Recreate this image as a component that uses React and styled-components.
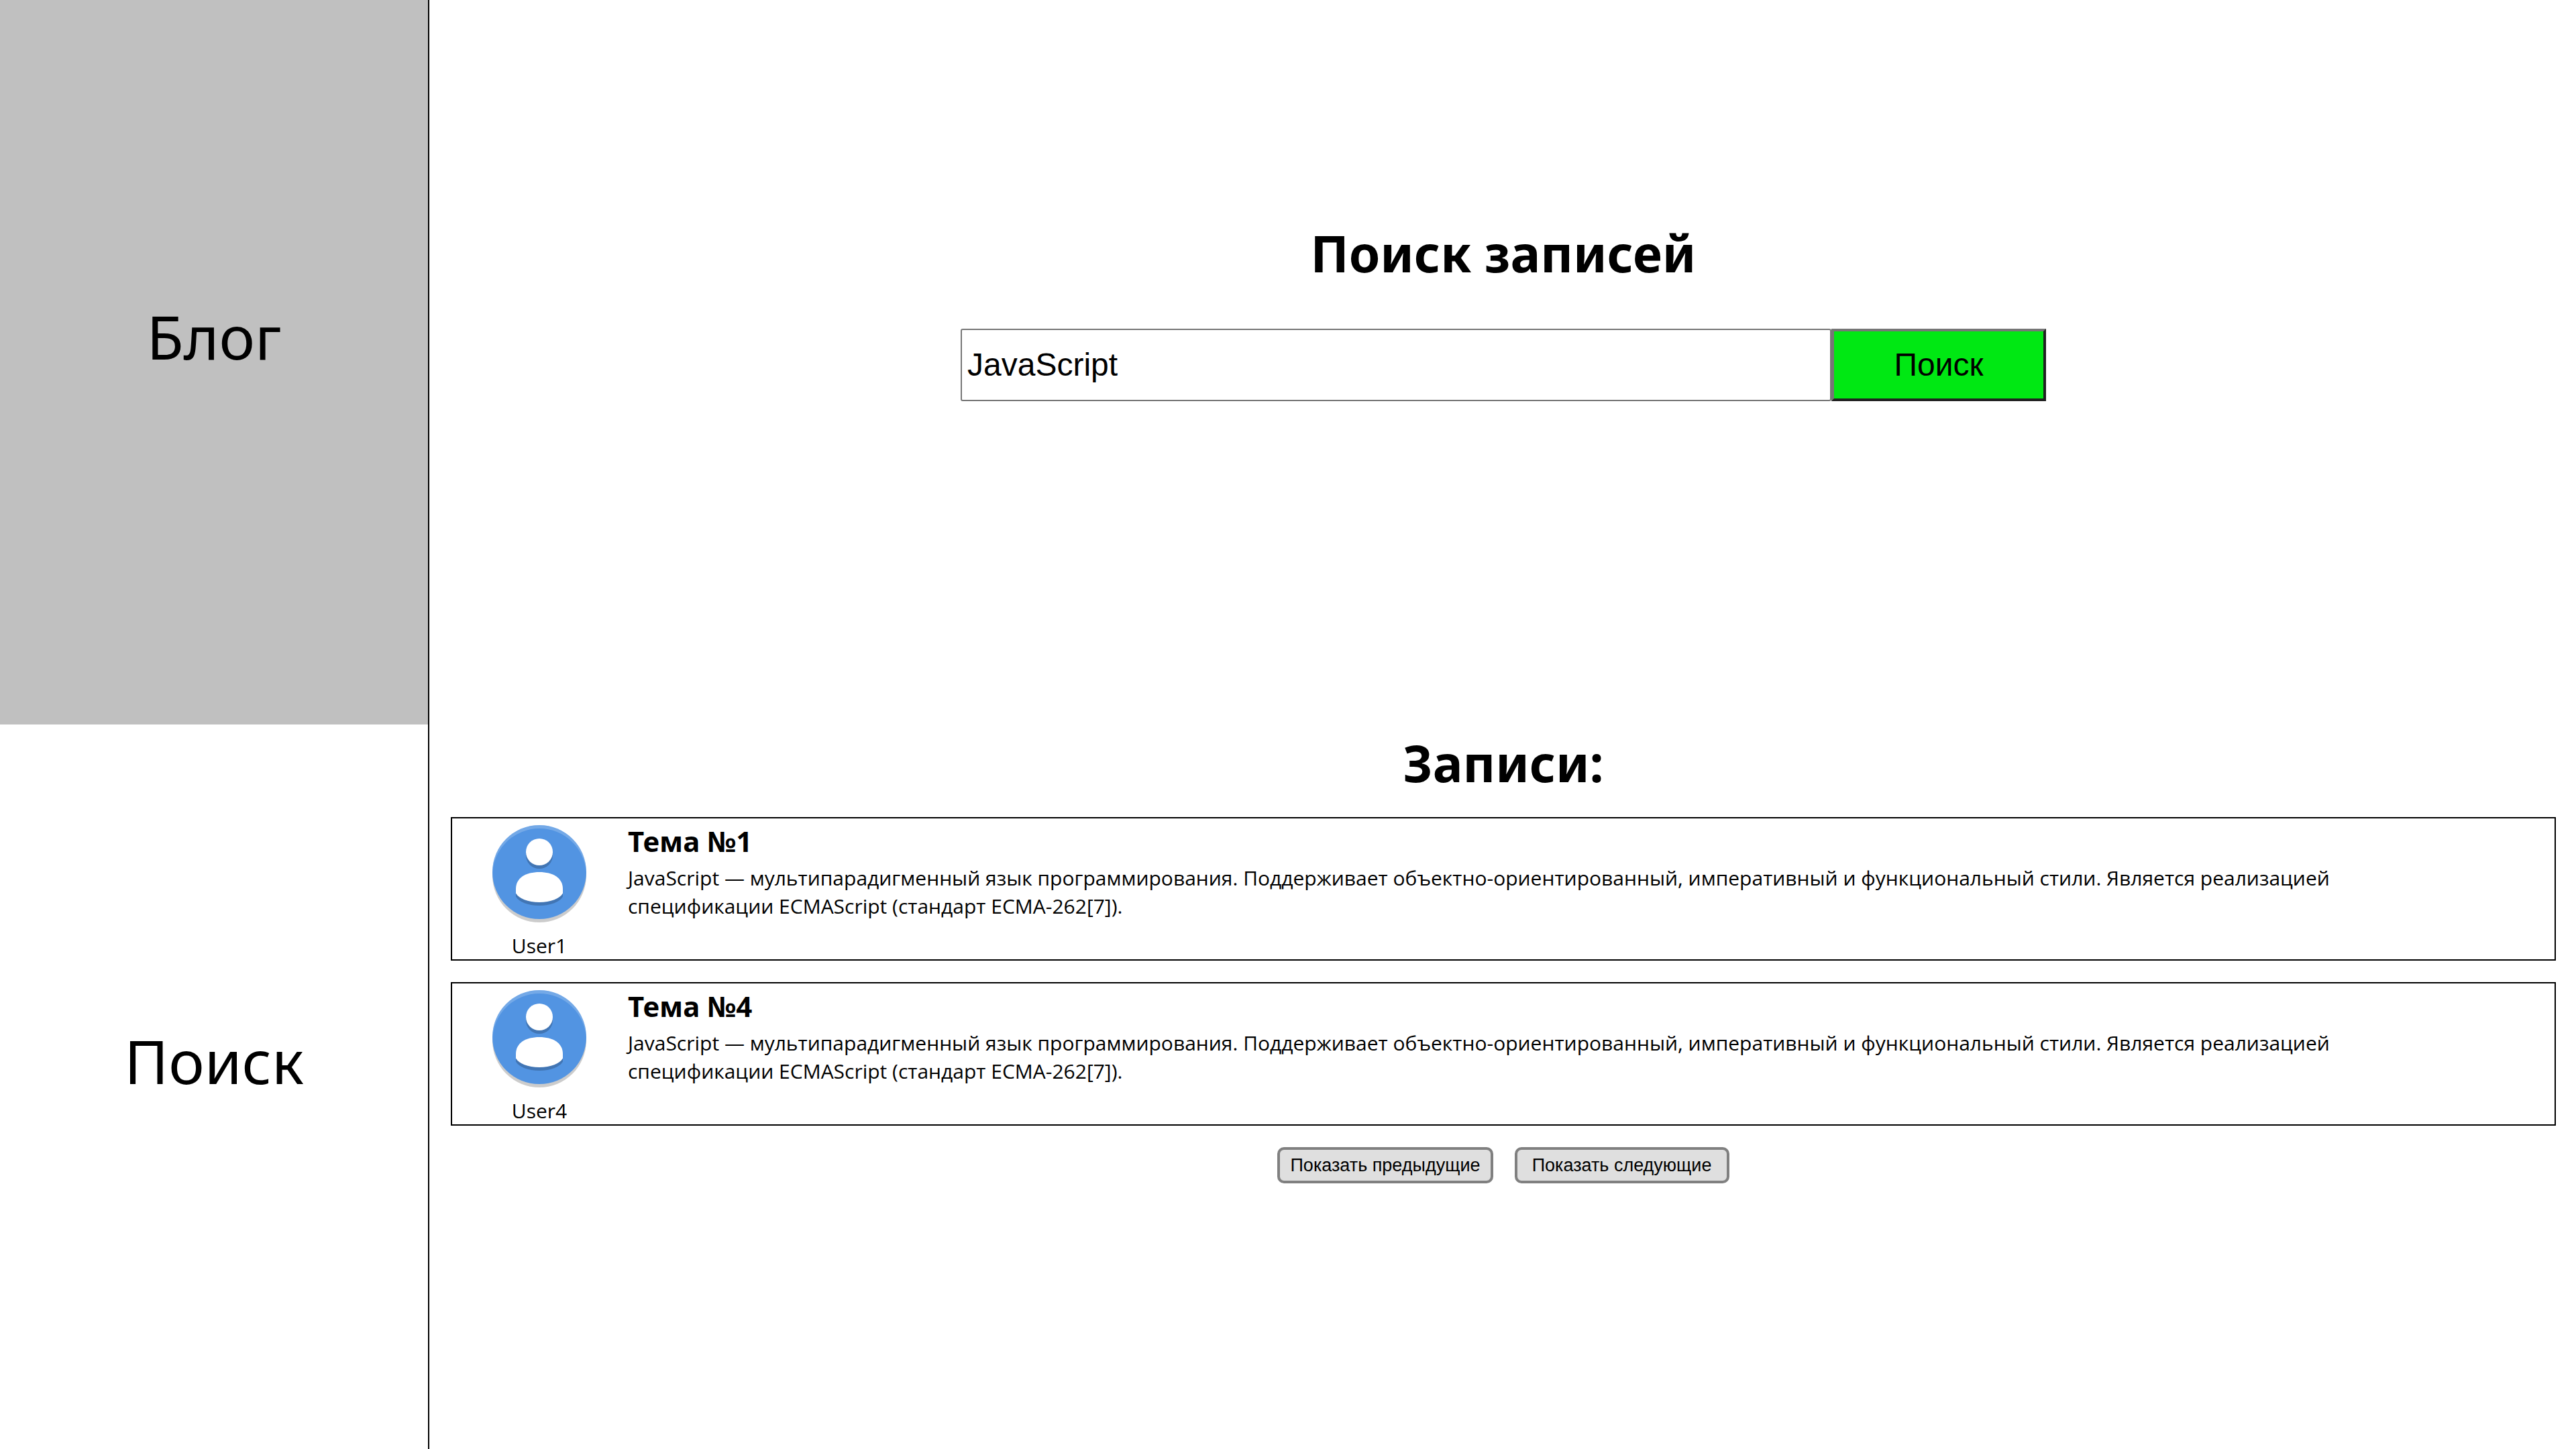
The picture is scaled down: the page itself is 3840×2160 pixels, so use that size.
import React, { useState } from "react";
import styled, { createGlobalStyle } from "styled-components";

const GlobalStyle = createGlobalStyle`
  *, *::before, *::after {
    box-sizing: border-box;
  }

  body {
    margin: 0;
    background: #ffffff;
    color: #000000;
    font-family: "Open Sans", "Noto Sans", sans-serif;
  }
`;

const Page = styled.div`
  display: grid;
  grid-template-columns: 1fr 5fr;
  min-height: 100vh;
`;

const Sidebar = styled.nav`
  display: grid;
  grid-template-rows: 1fr 1fr;
  border-right: 2px solid #000000;
`;

const SidebarLink = styled.a`
  padding-top: 20vh;
  background: ${({ $active }) => ($active ? "#c0c0c0" : "transparent")};
  color: inherit;
  font-family: "Noto Sans", sans-serif;
  font-size: 90px;
  line-height: 138px;
  text-align: center;
  text-decoration: none;
`;

const Main = styled.main`
  display: grid;
  grid-template-rows: 1fr 1fr;
  min-width: 0;
  padding: 0 30px 0 32px;
`;

const SearchSection = styled.section`
  display: flex;
  flex-direction: column;
  align-items: center;
  gap: 56px;
  padding-top: 320px;
`;

const Heading = styled.h1`
  margin: 0;
  font-family: "Noto Sans", sans-serif;
  font-size: 75px;
  font-weight: 700;
  line-height: 114px;
  text-align: center;
`;

const SearchForm = styled.form`
  display: flex;
  width: 1618px;
  max-width: 100%;
  height: 108px;
`;

const SearchInput = styled.input`
  flex: 1;
  min-width: 0;
  padding: 0 8px 2px;
  border: 2px solid #767676;
  border-radius: 3px;
  background: #ffffff;
  color: #000000;
  font-family: "Liberation Sans", Arial, sans-serif;
  font-size: 48px;
`;

const SearchButton = styled.button`
  width: 320px;
  padding: 0 8px 2px;
  border: 4px solid;
  border-color: #767676 #212121 #212121 #767676;
  background: #00e813;
  color: #000000;
  font-family: "Liberation Sans", Arial, sans-serif;
  font-size: 48px;
`;

const PostsSection = styled.section`
  display: flex;
  flex-direction: column;
  padding-bottom: 32px;
`;

const PostList = styled.ul`
  display: flex;
  flex-direction: column;
  gap: 32px;
  margin: 24px 0 32px;
  padding: 0;
  list-style: none;
`;

const PostCard = styled.li`
  display: grid;
  grid-template-columns: 260px 1fr;
  border: 2px solid #000000;
`;

const Author = styled.div`
  display: flex;
  flex-direction: column;
  align-items: center;
  gap: 10px;
  font-size: 30px;
  line-height: 40px;
`;

const AvatarSvg = styled.svg`
  display: block;
  width: 160px;
  height: 160px;
`;

const PostBody = styled.div`
  padding: 0 160px 0 2px;
`;

const PostTitle = styled.h2`
  margin: 0;
  font-family: "Noto Sans", sans-serif;
  font-size: 42px;
  font-weight: 700;
  line-height: 68px;
`;

const PostText = styled.p`
  margin: 0;
  font-size: 30px;
  line-height: 42px;
`;

const Pager = styled.div`
  display: flex;
  justify-content: center;
  gap: 32px;
`;

const PagerButton = styled.button`
  min-width: 320px;
  height: 54px;
  padding: 0 15px;
  border: 4px solid #808080;
  border-radius: 10px;
  background: #dfdfdf;
  color: #000000;
  font-family: "Liberation Sans", Arial, sans-serif;
  font-size: 27px;
  white-space: nowrap;
`;

const BODY_PATH =
  "M16 16c-4 0-7 1.7-7 5v1.3C9.9 23.9 12.6 25 16 25s6.100-1.100 7-2.700V21c0-3.300-3-5-7-5z";

function Avatar() {
  return (
    <AvatarSvg viewBox="0 0 32 32" aria-hidden="true">
      <circle cx="16" cy="17" r="14" opacity="0.2" />
      <circle cx="16" cy="16" r="14" fill="#5294e2" />
      <g opacity="0.2">
        <circle cx="16" cy="11" r="4" />
        <path d={BODY_PATH} transform="translate(0 1)" />
      </g>
      <circle cx="16" cy="10" r="4" fill="#ffffff" />
      <path d={BODY_PATH} fill="#ffffff" />
      <path
        d="M16 2A14 14 0 0 0 2 16a14 14 0 0 0 .02.59A14 14 0 0 1 16 3a14 14 0 0 1 13.980 13.410A14 14 0 0 0 30 16 14 14 0 0 0 16 2z"
        fill="#ffffff"
        opacity="0.2"
      />
    </AvatarSvg>
  );
}

const TEXT =
  "JavaScript — мультипарадигменный язык программирования. Поддерживает объектно-ориентированный, императивный и функциональный стили. Является реализацией спецификации ECMAScript (стандарт ECMA-262[7]).";

const POSTS = [
  { id: 1, author: "User1", title: "Тема №1", text: TEXT },
  { id: 4, author: "User4", title: "Тема №4", text: TEXT },
];

function Post({ post }) {
  return (
    <PostCard>
      <Author>
        <Avatar />
        <span>{post.author}</span>
      </Author>
      <PostBody>
        <PostTitle>{post.title}</PostTitle>
        <PostText>{post.text}</PostText>
      </PostBody>
    </PostCard>
  );
}

export default function App() {
  const [query, setQuery] = useState("JavaScript");

  return (
    <>
      <GlobalStyle />
      <Page>
        <Sidebar>
          <SidebarLink href="#blog" $active>
            Блог
          </SidebarLink>
          <SidebarLink href="#search">Поиск</SidebarLink>
        </Sidebar>
        <Main>
          <SearchSection>
            <Heading>Поиск записей</Heading>
            <SearchForm role="search" onSubmit={(event) => event.preventDefault()}>
              <SearchInput
                type="text"
                aria-label="Поиск записей"
                value={query}
                onChange={(event) => setQuery(event.target.value)}
              />
              <SearchButton type="submit">Поиск</SearchButton>
            </SearchForm>
          </SearchSection>
          <PostsSection>
            <Heading as="h2">Записи:</Heading>
            <PostList>
              {POSTS.map((post) => (
                <Post key={post.id} post={post} />
              ))}
            </PostList>
            <Pager>
              <PagerButton type="button">Показать предыдущие</PagerButton>
              <PagerButton type="button">Показать следующие</PagerButton>
            </Pager>
          </PostsSection>
        </Main>
      </Page>
    </>
  );
}
